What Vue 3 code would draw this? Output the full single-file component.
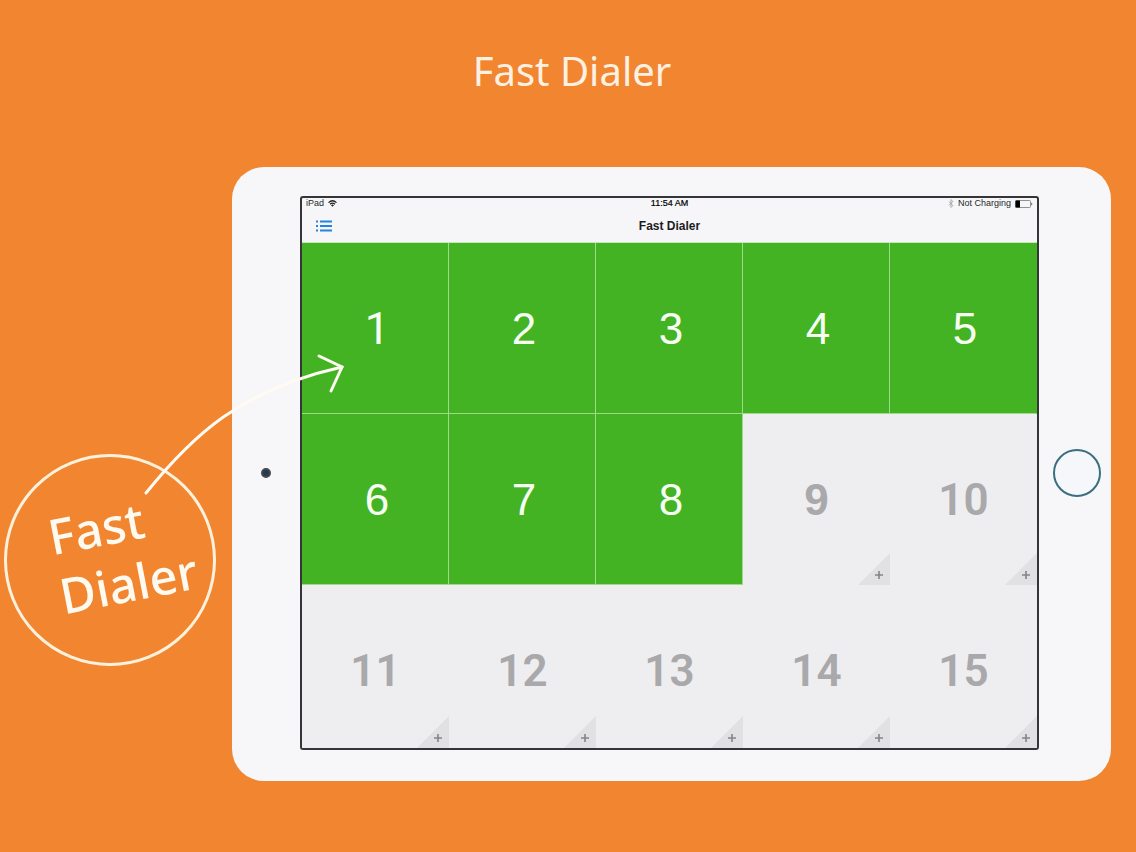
<script setup>
const keys = Array.from({ length: 15 }, (_, i) => {
  const n = i + 1
  return { n, filled: n <= 8, grotesk: String(n).includes('1') }
})
</script>

<template>
  <main class="page">
    <h1 class="title">Fast Dialer</h1>

    <section class="tablet">
      <div class="bezel left"><span class="camera"></span></div>

      <div class="screen">
        <div class="status">
          <span class="side">
            iPad
            <svg class="wifi" viewBox="0 0 18 14" aria-hidden="true">
              <g fill="none" stroke="#222" stroke-width="2.4">
                <path d="M1 5.2Q9-2.2 17 5.2" />
                <path d="M4 8.6Q9 3.8 14 8.6" />
              </g>
              <path d="M9 13.6 6 10.4Q9 8 12 10.4Z" fill="#222" />
            </svg>
          </span>
          <span class="time">11:54 AM</span>
          <span class="side end">
            <svg class="bluetooth" viewBox="0 0 10 16" aria-hidden="true">
              <path d="M1 4.5 8.5 11.5 5 15V1L8.5 4.5 1 11.5" fill="none" stroke="#999" stroke-width="1.4" />
            </svg>
            Not Charging
            <svg class="battery" viewBox="0 0 18 8" aria-hidden="true">
              <rect x=".5" y=".5" width="15" height="7" rx="1" fill="none" stroke="#777" stroke-width=".8" />
              <rect x=".5" y=".5" width="4.5" height="7" rx=".6" fill="#000" />
              <path d="M16.4 2.6Q18.2 4 16.4 5.4Z" fill="#444" />
            </svg>
          </span>
        </div>

        <div class="nav">
          <button class="menu" type="button" aria-label="List">
            <svg viewBox="0 0 16 12" aria-hidden="true">
              <path d="M0 1.5h2M0 6h2M0 10.5h2M4 1.5h12M4 6h12M4 10.5h12" stroke="#2385e0" stroke-width="2" />
            </svg>
          </button>
          <h2>Fast Dialer</h2>
        </div>

        <div class="grid">
          <button
            v-for="k in keys"
            :key="k.n"
            type="button"
            class="key"
            :class="{ filled: k.filled, grotesk: k.grotesk }"
          >
            <span class="num">{{ k.n }}</span>
            <svg v-if="!k.filled" class="corner" viewBox="0 0 32 32" aria-hidden="true">
              <path d="M32 0V32H0Z" fill="#e1e0e2" />
              <path d="M17 22h8M21 18v8" stroke="#858487" stroke-width="1.6" />
            </svg>
          </button>
        </div>
      </div>

      <div class="bezel right"><button class="home" type="button" aria-label="Home"></button></div>
    </section>

    <div class="callout">
      <p>Fast<br />Dialer</p>
    </div>
    <svg class="arrow" viewBox="0 0 204 144" aria-hidden="true">
      <g fill="none" stroke="#fffaf2" stroke-width="3" stroke-linecap="round">
        <path d="M4 141C50 84 98 38 200 15" />
        <path d="M177 4 200 15 189 39" />
      </g>
    </svg>
  </main>
</template>

<style>
html,
body {
  background: #f18530;
}
</style>

<style scoped>
.page {
  position: relative;
  box-sizing: border-box;
  min-height: 100vh;
  padding: 41px 25px 71px 232px;
  background: #f18530;
  font-family: "Liberation Sans", Arial, sans-serif;
}
.title {
  margin: 0 0 66px -199px;
  font: 400 40px/60px "Noto Sans", "Open Sans", sans-serif;
  text-align: center;
  color: #fff1e2;
}
.tablet {
  display: flex;
  align-items: center;
  box-sizing: border-box;
  padding: 29px 0 31px;
  border-radius: 32px;
  background: #f7f6f9;
}
.bezel {
  display: flex;
  flex: none;
  align-items: center;
  justify-content: center;
}
.left {
  width: 68px;
}
.right {
  width: 72px;
  box-sizing: border-box;
  padding-left: 4px;
}
.camera {
  width: 6px;
  height: 6px;
  border: 2px solid #45484e;
  border-radius: 50%;
  background: #263a4d;
}
.home {
  width: 48px;
  height: 48px;
  padding: 0;
  border: 2px solid #396f80;
  border-radius: 50%;
  background: #f5f7fa;
}
.screen {
  flex: 1;
  min-width: 0;
  overflow: hidden;
  border: 2px solid #353438;
  border-radius: 3px;
  background: #f6f5f8;
}
.status {
  display: flex;
  align-items: center;
  height: 11px;
  padding: 0 4px;
  font-size: 9px;
  line-height: 11px;
  color: #29292b;
}
.side {
  display: flex;
  flex: 1;
  align-items: center;
  gap: 4px;
}
.end {
  justify-content: flex-end;
}
.time {
  color: #000;
  -webkit-text-stroke: 0.2px #000;
}
.wifi {
  width: 9px;
  height: 7px;
}
.bluetooth {
  width: 6px;
  height: 9px;
}
.battery {
  width: 18px;
  height: 8px;
}
.nav {
  display: grid;
  grid-template-columns: 1fr auto 1fr;
  align-items: center;
  height: 33px;
  padding: 0 14px;
  border-bottom: 1px solid #c4e8b9;
}
.nav h2 {
  margin: 0;
  font-size: 12px;
  line-height: 16px;
  font-weight: 700;
  color: #1c1c1e;
}
.menu {
  display: flex;
  width: 16px;
  padding: 0;
  border: 0;
  background: none;
}
.menu svg {
  width: 16px;
  height: 12px;
}
.grid {
  display: grid;
  grid-template-columns: repeat(5, 1fr);
  grid-template-rows: 171px 171px 163px;
  background: #eeedef;
}
.key {
  position: relative;
  display: flex;
  align-items: flex-start;
  justify-content: center;
  padding: 61px 0 0;
  border: 0;
  background: #eeedef;
  color: #a9a8ab;
  font: 700 44px/50px "Liberation Sans", Arial, sans-serif;
}
.key.filled {
  padding-left: 4px;
  border-right: 1px solid #a0d98c;
  border-bottom: 1px solid #a0d98c;
  background: #43b323;
  color: #f7fff2;
  font-weight: 400;
}
.key.filled:nth-child(5n) {
  border-right-color: #43b323;
}
.key.grotesk {
  font-family: Roboto, "Liberation Sans", sans-serif;
}
.key.grotesk:not(.filled) {
  font-weight: 600;
}
.corner {
  position: absolute;
  right: 0;
  bottom: 0;
  width: 32px;
  height: 32px;
}
.callout {
  position: absolute;
  left: 4px;
  top: 454px;
  display: flex;
  align-items: center;
  justify-content: center;
  box-sizing: border-box;
  width: 212px;
  height: 212px;
  border: 3px solid #fff1dc;
  border-radius: 50%;
}
.callout p {
  width: 150px;
  margin: 0 0 16px 36px;
  font: 600 49px/60px "Noto Sans", "Open Sans", sans-serif;
  font-weight: 500;
  color: #fffaf0;
  transform: rotate(-11deg);
}
.arrow {
  position: absolute;
  left: 142px;
  top: 352px;
  width: 204px;
  height: 144px;
}
</style>
